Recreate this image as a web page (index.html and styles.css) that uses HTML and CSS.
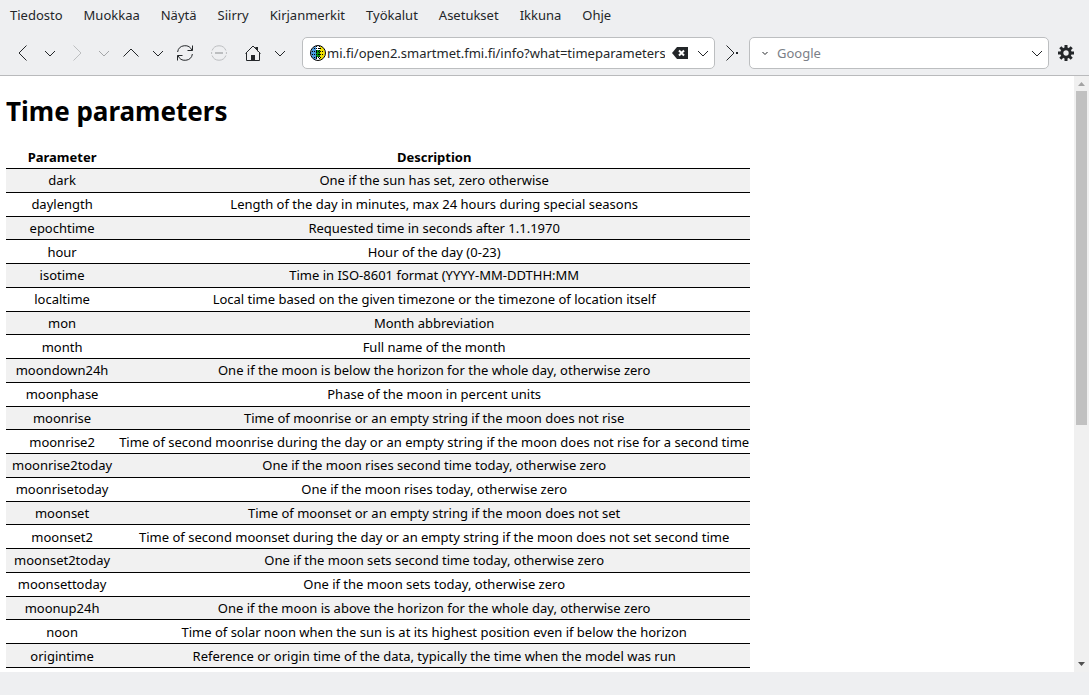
FILE: index.html
```
<!DOCTYPE html>
<html lang="fi">
<head>
<meta charset="utf-8">
<title>Time parameters</title>
<link rel="stylesheet" href="styles.css">
</head>
<body>
<nav class="menu">
<button>Tiedosto</button><button>Muokkaa</button><button>Näytä</button><button>Siirry</button><button>Kirjanmerkit</button><button>Työkalut</button><button>Asetukset</button><button>Ikkuna</button><button>Ohje</button>
</nav>
<div class="toolbar">
<div class="tools">
<button class="tool" aria-label="Takaisin"><svg viewBox="0 0 16 16"><path d="M11.500 .5 4 8l7.500 7.500"/></svg></button>
<button class="tool" aria-label="Historia taakse"><svg viewBox="0 0 16 16"><path d="m3 6 5 5 5-5"/></svg></button>
<button class="tool off" disabled aria-label="Eteenpäin"><svg viewBox="0 0 16 16"><path d="M4.500 .5 12 8l-7.500 7.500"/></svg></button>
<button class="tool dim" disabled aria-label="Historia eteen"><svg viewBox="0 0 16 16"><path d="m3 6 5 5 5-5"/></svg></button>
<button class="tool" aria-label="Ylös"><svg viewBox="0 0 16 16"><path d="M.5 11.500 8 4l7.500 7.500"/></svg></button>
<button class="tool" aria-label="Ylähakemistot"><svg viewBox="0 0 16 16"><path d="m3 6 5 5 5-5"/></svg></button>
<button class="tool" aria-label="Päivitä"><svg viewBox="0 0 16 16"><path d="M.6 7A7.500 7.500 0 0 1 15 5.500M15.500 .5v5h-5M15.400 9A7.500 7.500 0 0 1 1 10.500M.5 15.500v-5h5"/></svg></button>
<button class="tool stop off" disabled aria-label="Pysäytä"><svg viewBox="0 0 16 16"><path d="M14.900 10.500A7.400 7.400 0 0 1 1.100 10.500M1.100 5.500A7.400 7.400 0 0 1 14.900 5.500M.6 7v2M15.400 7v2"/><path class="thick" d="M4 8h8"/></svg></button>
<button class="tool" aria-label="Koti"><svg viewBox="0 0 16 16"><path d="M.5 8.500 8 1l7.500 7.500M1.500 8v7.500h13V8"/><path class="solid" d="M6 10h4v6H6zM10 2h3v5z"/></svg></button>
<button class="tool" aria-label="Kotivalikko"><svg viewBox="0 0 16 16"><path d="m3 6 5 5 5-5"/></svg></button>
</div>
<div class="field address">
<svg class="globe" viewBox="0 0 16 16"><circle cx="8" cy="8" r="7.500" fill="#fff"/><path fill="#4a9be0" d="M6 1v14Q1 13 1 8t5-7"/><path fill="#f0e000" d="M10 1v14q5-2 5-7t-5-7"/><path fill="#0a9a0a" d="M6 5h4v7H6z"/><path fill="none" stroke="#000" stroke-dasharray="1 1" d="M4 3.500h8M2 6.500h12M2 9.500h12M4 12.500h8M6.500 1v14M9.500 1v14"/><circle cx="8" cy="8" r="7.500" fill="none" stroke="#000"/></svg>
<input class="text" type="text" aria-label="Osoite" value="mi.fi/open2.smartmet.fmi.fi/info?what=timeparameters">
<button class="tool clear" aria-label="Tyhjennä"><svg viewBox="0 0 16 16"><path class="solid" d="m0 8 5-6h11v12H5z"/><path class="cross" d="m7 5.500 5 5m0-5-5 5"/></svg></button>
<button class="tool" aria-label="Osoiteluettelo"><svg viewBox="0 0 16 16"><path d="m3 6 5 5 5-5"/></svg></button>
</div>
<button class="tool go" aria-label="Siirry osoitteeseen"><svg viewBox="0 0 16 16"><path d="m2.500 .5 7.500 7.500-7.500 7.500"/><path class="solid" d="M12 7h2v2h-2z"/></svg></button>
<div class="field search">
<svg class="engine" viewBox="0 0 16 16"><path d="m5.500 7 2.500 2.500 2.500-2.500"/></svg>
<input class="text" type="text" aria-label="Haku" placeholder="Google">
<button class="tool" aria-label="Hakukoneet"><svg viewBox="0 0 16 16"><path d="m3 6 5 5 5-5"/></svg></button>
</div>
<button class="tool gear" aria-label="Asetukset"><svg viewBox="0 0 16 16"><circle cx="8" cy="8" r="4.200" stroke-width="3"/><path class="teeth" d="M8 0v3M8 13v3M0 8h3M13 8h3M2.300 2.300l2.200 2.200M11.500 11.500l2.200 2.200M2.300 13.700l2.200-2.200M11.500 4.500l2.200-2.200"/></svg></button>
</div>
<div class="view">
<main class="page">
<h1>Time parameters</h1>
<table>
<thead><tr><th>Parameter</th><th>Description</th></tr></thead>
<tbody>
<tr><td>dark</td><td>One if the sun has set, zero otherwise</td></tr>
<tr><td>daylength</td><td>Length of the day in minutes, max 24 hours during special seasons</td></tr>
<tr><td>epochtime</td><td>Requested time in seconds after 1.1.1970</td></tr>
<tr><td>hour</td><td>Hour of the day (0-23)</td></tr>
<tr><td>isotime</td><td>Time in ISO-8601 format (YYYY-MM-DDTHH:MM</td></tr>
<tr><td>localtime</td><td>Local time based on the given timezone or the timezone of location itself</td></tr>
<tr><td>mon</td><td>Month abbreviation</td></tr>
<tr><td>month</td><td>Full name of the month</td></tr>
<tr><td>moondown24h</td><td>One if the moon is below the horizon for the whole day, otherwise zero</td></tr>
<tr><td>moonphase</td><td>Phase of the moon in percent units</td></tr>
<tr><td>moonrise</td><td>Time of moonrise or an empty string if the moon does not rise</td></tr>
<tr><td>moonrise2</td><td>Time of second moonrise during the day or an empty string if the moon does not rise for a second time</td></tr>
<tr><td>moonrise2today</td><td>One if the moon rises second time today, otherwise zero</td></tr>
<tr><td>moonrisetoday</td><td>One if the moon rises today, otherwise zero</td></tr>
<tr><td>moonset</td><td>Time of moonset or an empty string if the moon does not set</td></tr>
<tr><td>moonset2</td><td>Time of second moonset during the day or an empty string if the moon does not set second time</td></tr>
<tr><td>moonset2today</td><td>One if the moon sets second time today, otherwise zero</td></tr>
<tr><td>moonsettoday</td><td>One if the moon sets today, otherwise zero</td></tr>
<tr><td>moonup24h</td><td>One if the moon is above the horizon for the whole day, otherwise zero</td></tr>
<tr><td>noon</td><td>Time of solar noon when the sun is at its highest position even if below the horizon</td></tr>
<tr><td>origintime</td><td>Reference or origin time of the data, typically the time when the model was run</td></tr>
</tbody>
</table>
</main>
<div class="scrollbar">
<svg class="arrow up" viewBox="0 0 15 15"><path d="m4 10 3.500-4 3.500 4z"/></svg>
<div class="track"><div class="thumb"></div></div>
<svg class="arrow" viewBox="0 0 15 15"><path d="m4 5 3.500 4L11 5z"/></svg>
</div>
</div>
<footer class="status"></footer>
</body>
</html>
```
FILE: styles.css
```
* { box-sizing: border-box; }
body {
  margin: 0;
  height: 100vh;
  display: flex;
  flex-direction: column;
  background: #eeeff1;
  color: #232629;
  font: 13px "Noto Sans", sans-serif;
}
button, input { font: inherit; color: inherit; border: 0; padding: 0; background: none; }
.menu { display: flex; gap: 21px; padding: 0 10px 2px; height: 31px; }
.toolbar {
  display: flex;
  align-items: center;
  height: 45px;
  padding: 0 15px;
  border-bottom: 1px solid #b9babc;
}
.tools { display: flex; gap: 11px; margin-right: 14px; }
svg { display: block; width: 16px; height: 16px; fill: none; stroke: currentColor; flex: none; }
.tool { width: 16px; height: 16px; flex: none; }
.stop { margin: 0 7px; }
.off { color: #bcbec0; }
.dim { color: #a4a6a8; }
.solid { fill: currentColor; stroke: none; }
.thick { stroke-width: 2; }
.cross { stroke: #fff; stroke-width: 2; }
.teeth { stroke-width: 3; }
.field {
  display: flex;
  align-items: center;
  height: 32px;
  padding: 0 3px 0 7px;
  background: #fff;
  border: 1px solid #bcbec0;
  border-radius: 5px;
}
.address { flex: 401 1 0; }
.search { flex: 288 1 0; }
.globe { stroke: none; margin-right: 1px; }
.text { flex: 1; min-width: 0; outline: none; }
.text::placeholder { color: #7b8087; opacity: 1; }
.clear { margin: 0 7px; }
.engine { margin-right: 4px; }
.go { margin: 0 9px; }
.gear { margin-left: 9px; }
.view { flex: 1; min-height: 0; display: flex; background: #fff; }
.page {
  flex: 1;
  display: flex;
  flex-direction: column;
  align-items: flex-start;
  padding: 17px 6px 4px;
  color: #000;
  overflow: hidden;
}
h1 { margin: 0 0 17px; font-size: 26px; line-height: 36px; font-weight: 700; }
table { flex: 1; border-collapse: collapse; text-align: center; line-height: 17px; }
th, td { padding: 3px 1px 2px; border-bottom: 1px solid #000; white-space: nowrap; }
th:first-child, td:first-child { padding-left: 6px; padding-right: 6px; }
tbody tr:nth-child(odd) { background: #f1f1f1; }
.scrollbar { width: 15px; display: flex; flex-direction: column; background: #f0f0f0; }
.track { flex: 1; padding: 0 2px; }
.thumb { height: 59%; background: #c1c1c1; }
.arrow { width: 15px; height: 15px; stroke: none; fill: #505050; }
.up { fill: #a3a3a3; }
.status { height: 23px; }
```
